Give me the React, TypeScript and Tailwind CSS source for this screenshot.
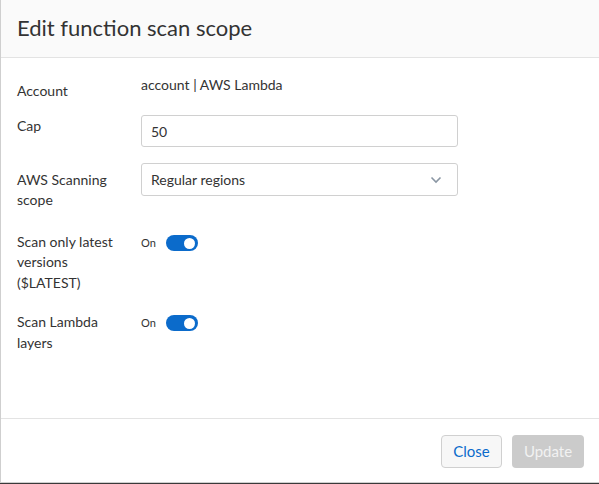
import React from 'react'

const Toggle = () => (
  <div className="flex items-center gap-[10px]">
    <span className="text-[11px] text-[#333]">On</span>
    <div className="w-[32px] h-[16px] rounded-full bg-[#0b6bcb] flex items-center justify-end pr-[3px]">
      <div className="w-[11px] h-[11px] rounded-full bg-white" />
    </div>
  </div>
)

const App = () => {
  return (
    <div className="w-[599px] h-[484px] bg-[#3a3a3a] font-['Lato',sans-serif] text-[#333]">
      <div className="h-[483px] bg-white border-l border-b border-[#cfcfcf] flex flex-col">
        <div className="h-[58px] bg-[#fafafa] border-b border-[#e3e3e3] flex items-center px-[16px] shrink-0">
          <h1 className="text-[22px] text-[#333] leading-none pb-[2px]">Edit function scan scope</h1>
        </div>
        <div className="flex-1 px-[16px] pt-[20px] flex flex-col">
          <div className="flex items-start h-[37px]">
            <div className="w-[124px] text-[14px] pt-[2px]">Account</div>
            <div className="text-[14px] -mt-[4px]">account | AWS Lambda</div>
          </div>
          <div className="flex items-center h-[32px]">
            <div className="w-[124px] text-[14px] -mt-[11px]">Cap</div>
            <div className="w-[317px] h-[32px] border border-[#d0d0d0] rounded-[3px] flex items-center px-[9px] text-[14px]">50</div>
          </div>
          <div className="flex items-start mt-[16px] h-[70px]">
            <div className="w-[124px] text-[14px] leading-[20px] pt-[7px]">AWS Scanning<br />scope</div>
            <div className="w-[317px] h-[33px] border border-[#d0d0d0] rounded-[3px] flex items-center justify-between px-[9px] text-[14px]">
              <span>Regular regions</span>
              <svg width="12" height="8" viewBox="0 0 12 8" className="mr-[6px]">
                <path d="M1.5 1.5 L6 6 L10.5 1.5" fill="none" stroke="#8a96a3" strokeWidth="1.6" />
              </svg>
            </div>
          </div>
          <div className="flex items-start h-[80px]">
            <div className="w-[124px] text-[14px] leading-[20.5px] -mt-[1.5px]">Scan only latest<br />versions<br />($LATEST)</div>
            <div className="pt-[2px]"><Toggle /></div>
          </div>
          <div className="flex items-start">
            <div className="w-[124px] text-[14px] leading-[20.5px] -mt-[1px]">Scan Lambda<br />layers</div>
            <div className="pt-[2px]"><Toggle /></div>
          </div>
        </div>
        <div className="h-[64px] border-t border-[#e3e3e3] flex items-center justify-end gap-[10px] pr-[15px] pt-[1px] shrink-0">
          <button className="w-[61px] h-[33px] rounded-[4px] border border-[#d0d0d0] bg-[#f7f7f7] text-[#0b6bcb] text-[15px]">Close</button>
          <button className="w-[72px] h-[33px] rounded-[4px] bg-[#cbcbcb] text-[#f2f2f2] text-[15px]">Update</button>
        </div>
      </div>
    </div>
  )
}

export default App
